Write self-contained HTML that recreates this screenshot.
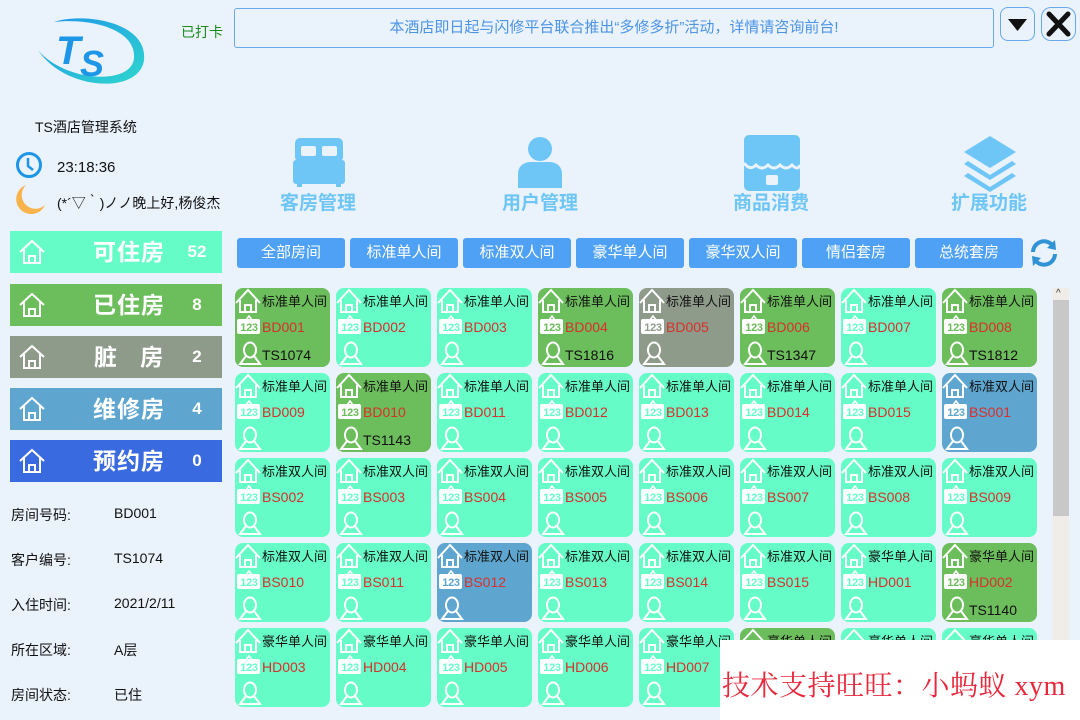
<!DOCTYPE html>
<html><head><meta charset="utf-8"><style>
*{margin:0;padding:0;box-sizing:border-box}
body{width:1080px;height:720px;background:#eaf2fc;font-family:"Liberation Sans","Noto Sans CJK SC",sans-serif;position:relative;overflow:hidden}
.a{position:absolute}
.st{position:absolute;left:10px;width:212px;height:42px;color:#fff;font-size:23px;font-weight:bold;line-height:42px}
.st .t{position:absolute;left:74px;top:0;width:90px;text-align:center;letter-spacing:1px}
.st .n{position:absolute;left:176px;top:0;font-size:17px;width:22px;text-align:center}
.st svg{position:absolute;left:8px;top:7px}
.lb{position:absolute;left:11px;font-size:14px;color:#111}
.vl{position:absolute;left:114px;font-size:14px;color:#111}
.fb{position:absolute;top:238px;width:108px;height:30px;background:#4ea1f5;border-radius:3px;color:#fff;font-size:15px;text-align:center;line-height:30px}
.ic{position:absolute;top:188px;font-size:19px;font-weight:bold;color:#6ec6f7;text-align:center;width:120px}
.c{position:absolute;width:95px;height:79px;border-radius:8px;background:#66fcc8;overflow:hidden;color:#66fcc8}
.g{background:#6cbd5b;color:#6cbd5b}.y{background:#8e9b8a;color:#8e9b8a}.b{background:#5ea6cf;color:#5ea6cf}
.c::before{content:"123";position:absolute;left:3px;top:34px;width:22px;text-align:center;font-size:11px;font-weight:bold;color:inherit;z-index:2;letter-spacing:-0.3px}
.c.x::before{content:none}
.c .h{position:absolute;left:0;top:0}
.c .ty{position:absolute;left:27px;top:3px;font-size:13px;color:#111;white-space:nowrap}
.c .bd{position:absolute;left:2px;top:27px}
.c .id{position:absolute;left:27px;top:31px;font-size:14px;color:#d8302a}
.c .p{position:absolute;left:3px;top:53px}
.c .ts{position:absolute;left:27px;top:59px;font-size:14px;color:#111}
</style></head><body>
<svg width="0" height="0" style="position:absolute"><defs>
<symbol id="hs" viewBox="0 0 26 26"><path d="M1 15 L13 2 L25 15" fill="none" stroke="#fff" stroke-width="2"/><path d="M5 12 V24 H21 V12 M10 24 V17 H16 V24" fill="none" stroke="#fff" stroke-width="2"/></symbol>
<symbol id="bg" viewBox="0 0 24 20"><path d="M9 5 L12 1 L15 5" fill="none" stroke="#fff" stroke-width="1.6"/><rect x="0" y="4" width="23" height="15" rx="2" fill="#fff"/></symbol>
<symbol id="ps" viewBox="0 0 24 24"><ellipse cx="12" cy="9" rx="6" ry="7.5" fill="none" stroke="#fff" stroke-width="2"/><path d="M8 15 L2 23 H22 L16 15" fill="none" stroke="#fff" stroke-width="2"/></symbol>
<symbol id="hl" viewBox="0 0 28 28"><path d="M2 14 L14 3 L26 14" fill="none" stroke="#fff" stroke-width="2"/><path d="M6 11 V25 H22 V11 M11 25 V18 H17 V25" fill="none" stroke="#fff" stroke-width="2"/></symbol>
</defs></svg>

<svg class="a" style="left:36px;top:16px" width="112" height="78" viewBox="0 0 112 78">
<defs><linearGradient id="lg" x1="0" y1="0" x2="1" y2="1"><stop offset="0" stop-color="#1e96e8"/><stop offset="1" stop-color="#2fd6cf"/></linearGradient></defs>
<path d="M18 6 C48 -4 112 6 108 44 C104 78 30 76 2 34 C28 66 96 70 98 42 C100 12 52 2 18 6Z" fill="url(#lg)"/>
<text x="20" y="48" font-family="Liberation Sans" font-weight="bold" font-style="italic" font-size="40" fill="#1e96e8">T</text>
<text x="44" y="60" font-family="Liberation Sans" font-weight="bold" font-style="italic" font-size="36" fill="#1e96e8">S</text>
</svg>
<div class="a" style="left:35px;top:117px;font-size:14px;color:#111">TS酒店管理系统</div>
<svg class="a" style="left:15px;top:151px" width="28" height="28" viewBox="0 0 28 28"><circle cx="14" cy="14" r="11.5" fill="none" stroke="#1e96e8" stroke-width="3"/><path d="M13 7 V15 L18 19" fill="none" stroke="#1e96e8" stroke-width="2.5"/></svg>
<div class="a" style="left:57px;top:159px;font-size:15px;color:#111">23:18:36</div>
<svg class="a" style="left:12px;top:183px" width="34" height="34" viewBox="0 0 34 34"><path d="M14 2 A15 15 0 1 0 33 22 A12 12 0 0 1 14 2Z" fill="#f9b34a"/></svg>
<div class="a" style="left:57px;top:193px;font-size:14px;color:#111">(*´▽｀)ノノ晚上好,杨俊杰</div>

<div class="a" style="left:181px;top:22px;font-size:14px;color:#1a8a1a">已打卡</div>
<div class="a" style="left:234px;top:8px;width:760px;height:40px;border:1px solid #6aa8ee;border-radius:3px;font-size:15px;color:#4d94e6;text-align:center;line-height:38px">本酒店即日起与闪修平台联合推出“多修多折”活动，详情请咨询前台!</div>
<div class="a" style="left:1000px;top:7px;width:35px;height:34px;border:1px solid #6aa8ee;border-radius:8px"><svg width="33" height="32"><path d="M7 11 H26 L16.5 23Z" fill="#111"/></svg></div>
<div class="a" style="left:1041px;top:7px;width:35px;height:34px;border:1px solid #6aa8ee;border-radius:10px"><svg width="33" height="32"><path d="M7 6 L26 26 M26 6 L7 26" stroke="#111" stroke-width="5" stroke-linecap="round"/></svg></div>

<svg class="a" style="left:293px;top:136px" width="52" height="52" viewBox="0 0 52 52"><rect x="2" y="2" width="48" height="24" rx="5" fill="#6ec6f7"/><rect x="8" y="10" width="15" height="10" rx="2" fill="#eaf2fc"/><rect x="29" y="10" width="15" height="10" rx="2" fill="#eaf2fc"/><rect x="0" y="24" width="52" height="24" rx="3" fill="#6ec6f7"/><rect x="4" y="46" width="5" height="5" fill="#6ec6f7"/><rect x="43" y="46" width="5" height="5" fill="#6ec6f7"/></svg>
<div class="ic" style="left:258px">客房管理</div>
<svg class="a" style="left:515px;top:136px" width="50" height="52" viewBox="0 0 50 52"><circle cx="25" cy="13" r="12" fill="#6ec6f7"/><path d="M3 52 V38 C3 30 9 26 16 26 H34 C41 26 47 30 47 38 V52Z" fill="#6ec6f7"/></svg>
<div class="ic" style="left:480px">用户管理</div>
<svg class="a" style="left:742px;top:135px" width="60" height="56" viewBox="0 0 60 56"><rect x="2" y="0" width="56" height="56" rx="5" fill="#6ec6f7"/><path d="M2 28 Q8 36 14 30 Q20 36 26 30 Q32 36 38 30 Q44 36 50 30 Q56 36 58 30" fill="none" stroke="#eaf2fc" stroke-width="3"/><rect x="24" y="40" width="12" height="10" rx="2" fill="#eaf2fc"/></svg>
<div class="ic" style="left:711px">商品消费</div>
<svg class="a" style="left:962px;top:134px" width="56" height="58" viewBox="0 0 56 58"><path d="M28 2 L54 18 L28 34 L2 18Z" fill="#6ec6f7"/><path d="M6 27 L28 41 L50 27 L54 30 L28 46 L2 30Z" fill="#6ec6f7"/><path d="M6 39 L28 53 L50 39 L54 42 L28 58 L2 42Z" fill="#6ec6f7"/></svg>
<div class="ic" style="left:929px">扩展功能</div>

<div class="st" style="top:231px;background:#66fcc8"><svg width="28" height="28"><use href="#hl"/></svg><span class="t">可住房</span><span class="n">52</span></div>
<div class="st" style="top:284px;background:#6cbd5b"><svg width="28" height="28"><use href="#hl"/></svg><span class="t">已住房</span><span class="n">8</span></div>
<div class="st" style="top:336px;background:#8e9b8a"><svg width="28" height="28"><use href="#hl"/></svg><span class="t">脏&nbsp;&nbsp;&nbsp;房</span><span class="n">2</span></div>
<div class="st" style="top:388px;background:#5ea6cf"><svg width="28" height="28"><use href="#hl"/></svg><span class="t">维修房</span><span class="n">4</span></div>
<div class="st" style="top:440px;background:#3a6ae0"><svg width="28" height="28"><use href="#hl"/></svg><span class="t">预约房</span><span class="n">0</span></div>

<div class="lb" style="top:505px">房间号码:</div><div class="vl" style="top:505px">BD001</div>
<div class="lb" style="top:550px">客户编号:</div><div class="vl" style="top:550px">TS1074</div>
<div class="lb" style="top:595px">入住时间:</div><div class="vl" style="top:595px">2021/2/11</div>
<div class="lb" style="top:640px">所在区域:</div><div class="vl" style="top:640px">A层</div>
<div class="lb" style="top:685px">房间状态:</div><div class="vl" style="top:685px">已住</div>

<div class="fb" style="left:237px">全部房间</div>
<div class="fb" style="left:350px">标准单人间</div>
<div class="fb" style="left:463px">标准双人间</div>
<div class="fb" style="left:576px">豪华单人间</div>
<div class="fb" style="left:689px">豪华双人间</div>
<div class="fb" style="left:802px">情侣套房</div>
<div class="fb" style="left:915px">总统套房</div>
<svg class="a" style="left:1028px;top:237px" width="32" height="32" viewBox="0 0 32 32"><path d="M5 15 A11 11 0 0 1 25 9" fill="none" stroke="#2f93d6" stroke-width="4"/><path d="M27 3 L28 13 L19 11Z" fill="#2f93d6"/><path d="M27 17 A11 11 0 0 1 7 23" fill="none" stroke="#2f93d6" stroke-width="4"/><path d="M5 29 L4 19 L13 21Z" fill="#2f93d6"/></svg>

<div class="a" style="left:1053px;top:288px;width:16px;height:360px;background:#f0ece8"></div>
<div class="a" style="left:1053px;top:300px;width:16px;height:216px;background:#c8c8c8"></div>
<div class="a" style="left:1056px;top:288px;font-size:10px;color:#333">^</div>

<div id="g">
<div class="c g" style="left:235px;top:288px"><svg class="h" width="26" height="26"><use href="#hs"/></svg><span class="ty">标准单人间</span><svg class="bd" width="24" height="20"><use href="#bg"/></svg><span class="id">BD001</span><svg class="p" width="24" height="24"><use href="#ps"/></svg><span class="ts">TS1074</span></div>
<div class="c" style="left:336px;top:288px"><svg class="h" width="26" height="26"><use href="#hs"/></svg><span class="ty">标准单人间</span><svg class="bd" width="24" height="20"><use href="#bg"/></svg><span class="id">BD002</span><svg class="p" width="24" height="24"><use href="#ps"/></svg></div>
<div class="c" style="left:437px;top:288px"><svg class="h" width="26" height="26"><use href="#hs"/></svg><span class="ty">标准单人间</span><svg class="bd" width="24" height="20"><use href="#bg"/></svg><span class="id">BD003</span><svg class="p" width="24" height="24"><use href="#ps"/></svg></div>
<div class="c g" style="left:538px;top:288px"><svg class="h" width="26" height="26"><use href="#hs"/></svg><span class="ty">标准单人间</span><svg class="bd" width="24" height="20"><use href="#bg"/></svg><span class="id">BD004</span><svg class="p" width="24" height="24"><use href="#ps"/></svg><span class="ts">TS1816</span></div>
<div class="c y" style="left:639px;top:288px"><svg class="h" width="26" height="26"><use href="#hs"/></svg><span class="ty">标准单人间</span><svg class="bd" width="24" height="20"><use href="#bg"/></svg><span class="id">BD005</span><svg class="p" width="24" height="24"><use href="#ps"/></svg></div>
<div class="c g" style="left:740px;top:288px"><svg class="h" width="26" height="26"><use href="#hs"/></svg><span class="ty">标准单人间</span><svg class="bd" width="24" height="20"><use href="#bg"/></svg><span class="id">BD006</span><svg class="p" width="24" height="24"><use href="#ps"/></svg><span class="ts">TS1347</span></div>
<div class="c" style="left:841px;top:288px"><svg class="h" width="26" height="26"><use href="#hs"/></svg><span class="ty">标准单人间</span><svg class="bd" width="24" height="20"><use href="#bg"/></svg><span class="id">BD007</span><svg class="p" width="24" height="24"><use href="#ps"/></svg></div>
<div class="c g" style="left:942px;top:288px"><svg class="h" width="26" height="26"><use href="#hs"/></svg><span class="ty">标准单人间</span><svg class="bd" width="24" height="20"><use href="#bg"/></svg><span class="id">BD008</span><svg class="p" width="24" height="24"><use href="#ps"/></svg><span class="ts">TS1812</span></div>

<div class="c" style="left:235px;top:373px"><svg class="h" width="26" height="26"><use href="#hs"/></svg><span class="ty">标准单人间</span><svg class="bd" width="24" height="20"><use href="#bg"/></svg><span class="id">BD009</span><svg class="p" width="24" height="24"><use href="#ps"/></svg></div>
<div class="c g" style="left:336px;top:373px"><svg class="h" width="26" height="26"><use href="#hs"/></svg><span class="ty">标准单人间</span><svg class="bd" width="24" height="20"><use href="#bg"/></svg><span class="id">BD010</span><svg class="p" width="24" height="24"><use href="#ps"/></svg><span class="ts">TS1143</span></div>
<div class="c" style="left:437px;top:373px"><svg class="h" width="26" height="26"><use href="#hs"/></svg><span class="ty">标准单人间</span><svg class="bd" width="24" height="20"><use href="#bg"/></svg><span class="id">BD011</span><svg class="p" width="24" height="24"><use href="#ps"/></svg></div>
<div class="c" style="left:538px;top:373px"><svg class="h" width="26" height="26"><use href="#hs"/></svg><span class="ty">标准单人间</span><svg class="bd" width="24" height="20"><use href="#bg"/></svg><span class="id">BD012</span><svg class="p" width="24" height="24"><use href="#ps"/></svg></div>
<div class="c" style="left:639px;top:373px"><svg class="h" width="26" height="26"><use href="#hs"/></svg><span class="ty">标准单人间</span><svg class="bd" width="24" height="20"><use href="#bg"/></svg><span class="id">BD013</span><svg class="p" width="24" height="24"><use href="#ps"/></svg></div>
<div class="c" style="left:740px;top:373px"><svg class="h" width="26" height="26"><use href="#hs"/></svg><span class="ty">标准单人间</span><svg class="bd" width="24" height="20"><use href="#bg"/></svg><span class="id">BD014</span><svg class="p" width="24" height="24"><use href="#ps"/></svg></div>
<div class="c" style="left:841px;top:373px"><svg class="h" width="26" height="26"><use href="#hs"/></svg><span class="ty">标准单人间</span><svg class="bd" width="24" height="20"><use href="#bg"/></svg><span class="id">BD015</span><svg class="p" width="24" height="24"><use href="#ps"/></svg></div>
<div class="c b" style="left:942px;top:373px"><svg class="h" width="26" height="26"><use href="#hs"/></svg><span class="ty">标准双人间</span><svg class="bd" width="24" height="20"><use href="#bg"/></svg><span class="id">BS001</span><svg class="p" width="24" height="24"><use href="#ps"/></svg></div>

<div class="c" style="left:235px;top:458px"><svg class="h" width="26" height="26"><use href="#hs"/></svg><span class="ty">标准双人间</span><svg class="bd" width="24" height="20"><use href="#bg"/></svg><span class="id">BS002</span><svg class="p" width="24" height="24"><use href="#ps"/></svg></div>
<div class="c" style="left:336px;top:458px"><svg class="h" width="26" height="26"><use href="#hs"/></svg><span class="ty">标准双人间</span><svg class="bd" width="24" height="20"><use href="#bg"/></svg><span class="id">BS003</span><svg class="p" width="24" height="24"><use href="#ps"/></svg></div>
<div class="c" style="left:437px;top:458px"><svg class="h" width="26" height="26"><use href="#hs"/></svg><span class="ty">标准双人间</span><svg class="bd" width="24" height="20"><use href="#bg"/></svg><span class="id">BS004</span><svg class="p" width="24" height="24"><use href="#ps"/></svg></div>
<div class="c" style="left:538px;top:458px"><svg class="h" width="26" height="26"><use href="#hs"/></svg><span class="ty">标准双人间</span><svg class="bd" width="24" height="20"><use href="#bg"/></svg><span class="id">BS005</span><svg class="p" width="24" height="24"><use href="#ps"/></svg></div>
<div class="c" style="left:639px;top:458px"><svg class="h" width="26" height="26"><use href="#hs"/></svg><span class="ty">标准双人间</span><svg class="bd" width="24" height="20"><use href="#bg"/></svg><span class="id">BS006</span><svg class="p" width="24" height="24"><use href="#ps"/></svg></div>
<div class="c" style="left:740px;top:458px"><svg class="h" width="26" height="26"><use href="#hs"/></svg><span class="ty">标准双人间</span><svg class="bd" width="24" height="20"><use href="#bg"/></svg><span class="id">BS007</span><svg class="p" width="24" height="24"><use href="#ps"/></svg></div>
<div class="c" style="left:841px;top:458px"><svg class="h" width="26" height="26"><use href="#hs"/></svg><span class="ty">标准双人间</span><svg class="bd" width="24" height="20"><use href="#bg"/></svg><span class="id">BS008</span><svg class="p" width="24" height="24"><use href="#ps"/></svg></div>
<div class="c" style="left:942px;top:458px"><svg class="h" width="26" height="26"><use href="#hs"/></svg><span class="ty">标准双人间</span><svg class="bd" width="24" height="20"><use href="#bg"/></svg><span class="id">BS009</span><svg class="p" width="24" height="24"><use href="#ps"/></svg></div>

<div class="c" style="left:235px;top:543px"><svg class="h" width="26" height="26"><use href="#hs"/></svg><span class="ty">标准双人间</span><svg class="bd" width="24" height="20"><use href="#bg"/></svg><span class="id">BS010</span><svg class="p" width="24" height="24"><use href="#ps"/></svg></div>
<div class="c" style="left:336px;top:543px"><svg class="h" width="26" height="26"><use href="#hs"/></svg><span class="ty">标准双人间</span><svg class="bd" width="24" height="20"><use href="#bg"/></svg><span class="id">BS011</span><svg class="p" width="24" height="24"><use href="#ps"/></svg></div>
<div class="c b" style="left:437px;top:543px"><svg class="h" width="26" height="26"><use href="#hs"/></svg><span class="ty">标准双人间</span><svg class="bd" width="24" height="20"><use href="#bg"/></svg><span class="id">BS012</span><svg class="p" width="24" height="24"><use href="#ps"/></svg></div>
<div class="c" style="left:538px;top:543px"><svg class="h" width="26" height="26"><use href="#hs"/></svg><span class="ty">标准双人间</span><svg class="bd" width="24" height="20"><use href="#bg"/></svg><span class="id">BS013</span><svg class="p" width="24" height="24"><use href="#ps"/></svg></div>
<div class="c" style="left:639px;top:543px"><svg class="h" width="26" height="26"><use href="#hs"/></svg><span class="ty">标准双人间</span><svg class="bd" width="24" height="20"><use href="#bg"/></svg><span class="id">BS014</span><svg class="p" width="24" height="24"><use href="#ps"/></svg></div>
<div class="c" style="left:740px;top:543px"><svg class="h" width="26" height="26"><use href="#hs"/></svg><span class="ty">标准双人间</span><svg class="bd" width="24" height="20"><use href="#bg"/></svg><span class="id">BS015</span><svg class="p" width="24" height="24"><use href="#ps"/></svg></div>
<div class="c" style="left:841px;top:543px"><svg class="h" width="26" height="26"><use href="#hs"/></svg><span class="ty">豪华单人间</span><svg class="bd" width="24" height="20"><use href="#bg"/></svg><span class="id">HD001</span><svg class="p" width="24" height="24"><use href="#ps"/></svg></div>
<div class="c g" style="left:942px;top:543px"><svg class="h" width="26" height="26"><use href="#hs"/></svg><span class="ty">豪华单人间</span><svg class="bd" width="24" height="20"><use href="#bg"/></svg><span class="id">HD002</span><svg class="p" width="24" height="24"><use href="#ps"/></svg><span class="ts">TS1140</span></div>

<div class="c" style="left:235px;top:628px"><svg class="h" width="26" height="26"><use href="#hs"/></svg><span class="ty">豪华单人间</span><svg class="bd" width="24" height="20"><use href="#bg"/></svg><span class="id">HD003</span><svg class="p" width="24" height="24"><use href="#ps"/></svg></div>
<div class="c" style="left:336px;top:628px"><svg class="h" width="26" height="26"><use href="#hs"/></svg><span class="ty">豪华单人间</span><svg class="bd" width="24" height="20"><use href="#bg"/></svg><span class="id">HD004</span><svg class="p" width="24" height="24"><use href="#ps"/></svg></div>
<div class="c" style="left:437px;top:628px"><svg class="h" width="26" height="26"><use href="#hs"/></svg><span class="ty">豪华单人间</span><svg class="bd" width="24" height="20"><use href="#bg"/></svg><span class="id">HD005</span><svg class="p" width="24" height="24"><use href="#ps"/></svg></div>
<div class="c" style="left:538px;top:628px"><svg class="h" width="26" height="26"><use href="#hs"/></svg><span class="ty">豪华单人间</span><svg class="bd" width="24" height="20"><use href="#bg"/></svg><span class="id">HD006</span><svg class="p" width="24" height="24"><use href="#ps"/></svg></div>
<div class="c" style="left:639px;top:628px"><svg class="h" width="26" height="26"><use href="#hs"/></svg><span class="ty">豪华单人间</span><svg class="bd" width="24" height="20"><use href="#bg"/></svg><span class="id">HD007</span><svg class="p" width="24" height="24"><use href="#ps"/></svg></div>
<div class="c g x" style="left:740px;top:628px"><svg class="h" width="26" height="26"><use href="#hs"/></svg><span class="ty">豪华单人间</span></div>
<div class="c x" style="left:841px;top:628px"><svg class="h" width="26" height="26"><use href="#hs"/></svg><span class="ty">豪华单人间</span></div>
<div class="c x" style="left:942px;top:628px"><svg class="h" width="26" height="26"><use href="#hs"/></svg><span class="ty">豪华单人间</span></div>
</div>

<div class="a" style="left:720px;top:640px;width:360px;height:80px;background:#fff;z-index:10"></div>
<div class="a" style="left:722px;top:664px;font-family:'Liberation Serif','Noto Serif CJK SC',serif;font-size:28px;color:#e8283c;white-space:nowrap;letter-spacing:0.5px;z-index:11">技术支持旺旺：小蚂蚁 xym</div>
</body></html>
